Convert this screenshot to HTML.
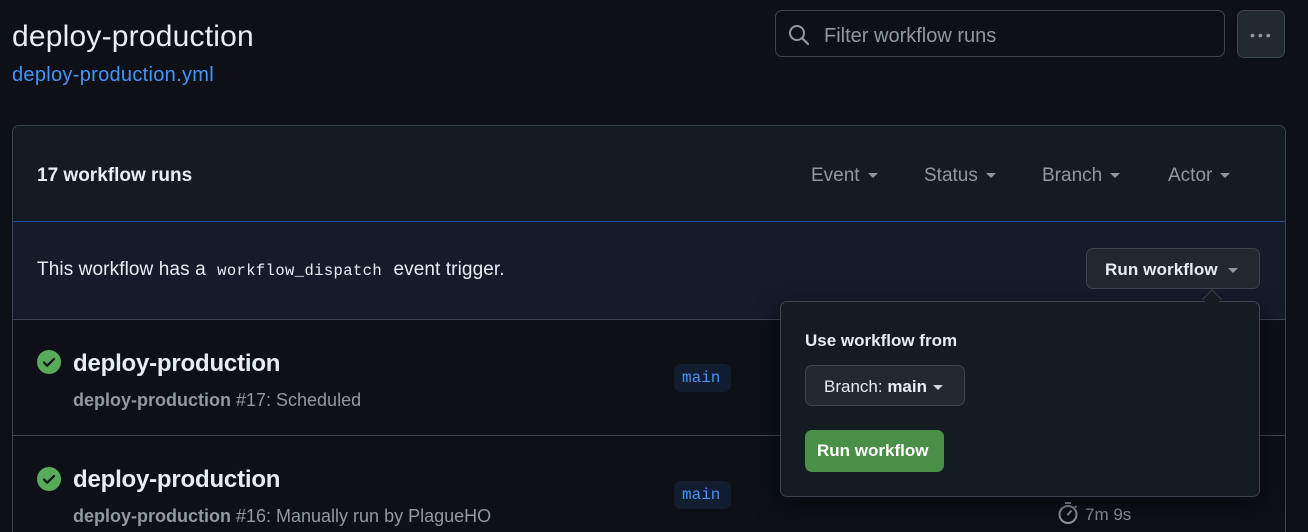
<!DOCTYPE html>
<html style="width:1308px;height:532px;overflow:hidden"><head><style>
*{box-sizing:border-box;margin:0;padding:0}
body{width:1308px;height:532px;overflow:hidden;background:#0d1117;font-family:"Liberation Sans",sans-serif;color:#e6edf3;position:relative}
.abs{position:absolute}
.caret{display:inline-block;width:0;height:0;border-left:5px solid transparent;border-right:5px solid transparent;border-top:5px solid currentColor;vertical-align:middle;margin-left:8px}
</style></head><body>
<div class="abs" style="left:12px;top:20px;font-size:30px;letter-spacing:0.2px">deploy-production</div>
<div class="abs" style="left:12px;top:64px;font-size:20px;color:#4493f8;letter-spacing:0.3px">deploy-production.yml</div>

<div class="abs" style="left:775px;top:10px;width:450px;height:47px;border:1px solid #3d444d;border-radius:7px;background:#0d1117"></div>
<svg class="abs" style="left:788px;top:24px" width="22" height="22" viewBox="0 0 22 22"><circle cx="9" cy="9" r="7" fill="none" stroke="#9198a1" stroke-width="2"/><line x1="14" y1="14" x2="20" y2="20" stroke="#9198a1" stroke-width="2.2" stroke-linecap="round"/></svg>
<div class="abs" style="left:824px;top:25px;font-size:20px;color:#9198a1;letter-spacing:0px">Filter workflow runs</div>
<div class="abs" style="left:1237px;top:10px;width:48px;height:48px;border:1px solid #3d444d;border-radius:7px;background:#212830"></div>
<div class="abs" style="left:1250px;top:27px;font-size:14px;color:#9198a1;letter-spacing:3px">•••</div>

<div class="abs" style="left:12px;top:125px;width:1274px;height:420px;border:1px solid #3d444d;border-radius:7px;background:#0d1117;overflow:hidden">
  <div style="height:96px;background:#151b23;border-bottom:1px solid #1f4f99;position:relative">
    <div class="abs" style="left:24px;top:39px;font-size:19px;font-weight:bold;letter-spacing:0px">17 workflow runs</div>
    <div class="abs" style="left:798px;top:39px;font-size:19px;color:#9198a1">Event<span class="caret"></span></div>
    <div class="abs" style="left:911px;top:39px;font-size:19px;color:#9198a1">Status<span class="caret"></span></div>
    <div class="abs" style="left:1029px;top:39px;font-size:19px;color:#9198a1">Branch<span class="caret"></span></div>
    <div class="abs" style="left:1155px;top:39px;font-size:19px;color:#9198a1">Actor<span class="caret"></span></div>
  </div>
  <div style="height:98px;background:#151b2b;border-bottom:1px solid #3d444d;position:relative">
    <div class="abs" style="left:24px;top:37px;font-size:19px;letter-spacing:0.1px">This workflow has a <span style="font-family:'Liberation Mono',monospace;font-size:15.5px;padding:0 6px;letter-spacing:0.4px">workflow_dispatch</span> event trigger.</div>
    <div class="abs" style="left:1073px;top:26px;width:174px;height:41px;border:1px solid #3d444d;border-radius:7px;background:#212830;font-size:17px;font-weight:bold;padding:11px 0 0 18px;letter-spacing:0.1px">Run workflow<span class="caret" style="margin-left:10px;color:#9198a1"></span></div>
  </div>
  <div style="height:116px;border-bottom:1px solid #3d444d;position:relative">
    <svg class="abs" style="left:24px;top:30px" width="24" height="24" viewBox="0 0 24 24"><circle cx="12" cy="12" r="12" fill="#57ab5a"/><path d="M7 12.5l3.2 3.2L17 9" fill="none" stroke="#0d1117" stroke-width="2.2" stroke-linecap="round" stroke-linejoin="round"/></svg>
    <div class="abs" style="left:60px;top:30px;font-size:24px;font-weight:bold;letter-spacing:-0.2px">deploy-production</div>
    <div class="abs" style="left:60px;top:70px;font-size:18px;color:#9198a1;letter-spacing:0px"><b>deploy-production</b> #17: Scheduled</div>
    <div class="abs" style="left:661px;top:44px;width:57px;height:28px;border-radius:7px;background:#121d2f;color:#4493f8;font-family:'Liberation Mono',monospace;font-size:16px;padding:5px 0 0 8px">main</div>
  </div>
  <div style="height:116px;position:relative">
    <svg class="abs" style="left:24px;top:31px" width="24" height="24" viewBox="0 0 24 24"><circle cx="12" cy="12" r="12" fill="#57ab5a"/><path d="M7 12.5l3.2 3.2L17 9" fill="none" stroke="#0d1117" stroke-width="2.2" stroke-linecap="round" stroke-linejoin="round"/></svg>
    <div class="abs" style="left:60px;top:30px;font-size:24px;font-weight:bold;letter-spacing:-0.2px">deploy-production</div>
    <div class="abs" style="left:60px;top:70px;font-size:18px;color:#9198a1;letter-spacing:0px"><b>deploy-production</b> #16: Manually run by PlagueHO</div>
    <div class="abs" style="left:661px;top:45px;width:57px;height:28px;border-radius:7px;background:#121d2f;color:#4493f8;font-family:'Liberation Mono',monospace;font-size:16px;padding:5px 0 0 8px">main</div>
    <svg class="abs" style="left:1044px;top:65px" width="22" height="24" viewBox="0 0 22 24"><circle cx="11" cy="13.5" r="8.5" fill="none" stroke="#9198a1" stroke-width="2"/><line x1="8" y1="2" x2="14" y2="2" stroke="#9198a1" stroke-width="2"/><line x1="11" y1="13.5" x2="14" y2="10" stroke="#9198a1" stroke-width="2" stroke-linecap="round"/><line x1="18" y1="5" x2="19.5" y2="6.5" stroke="#9198a1" stroke-width="2"/></svg>
    <div class="abs" style="left:1072px;top:69px;font-size:17px;color:#9198a1">7m 9s</div>
  </div>
</div>

<div class="abs" style="left:780px;top:301px;width:480px;height:196px;border:1px solid #3d444d;border-radius:7px;background:#151b23;box-shadow:0 8px 24px rgba(1,4,9,.6)">
  <div class="abs" style="left:24px;top:29px;font-size:17px;font-weight:bold;letter-spacing:0px">Use workflow from</div>
  <div class="abs" style="left:24px;top:63px;width:160px;height:41px;border:1px solid #3d444d;border-radius:7px;background:#212830;font-size:17px;padding:11px 0 0 18px;letter-spacing:0px">Branch: <b>main</b><span class="caret" style="margin-left:6px;color:#d1d7e0"></span></div>
  <div class="abs" style="left:24px;top:128px;width:139px;height:42px;border-radius:7px;background:#4a8f47;font-size:17px;font-weight:bold;padding:11px 0 0 12px;color:#fff;letter-spacing:0px">Run workflow</div>
</div>
<div class="abs" style="left:1205px;top:292px;width:14px;height:14px;background:#151b23;border-left:1px solid #3d444d;border-top:1px solid #3d444d;transform:rotate(45deg)"></div>
</body></html>
